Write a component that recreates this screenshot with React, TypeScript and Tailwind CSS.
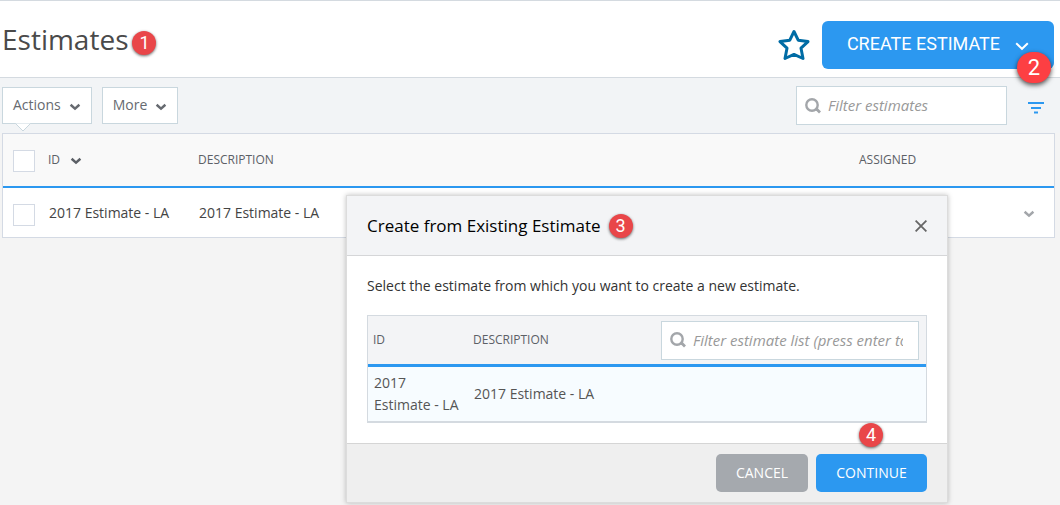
import React, { useState } from 'react';
import clsx from 'clsx';

interface Estimate {
  id: string;
  description: string;
  assigned: string;
}

const ESTIMATES: Estimate[] = [
  { id: '2017 Estimate - LA', description: '2017 Estimate - LA', assigned: '' },
];

const Chevron: React.FC<{ className?: string }> = ({ className }) => (
  <svg viewBox="0 0 12 8" className={clsx('h-2 w-3 shrink-0', className)} fill="none" stroke="currentColor" strokeWidth="2.5" aria-hidden="true">
    <path d="M1.6 1.8 6 5.6l4.4-3.8" />
  </svg>
);

const SearchIcon: React.FC = () => (
  <svg viewBox="0 0 16 16" className="size-4 shrink-0 text-[#a3a6aa]" fill="none" stroke="currentColor" aria-hidden="true">
    <circle cx="7" cy="7" r="5.7" strokeWidth="2.4" />
    <path d="M10.500 11.500h1.500l3 3" strokeWidth="2.8" />
  </svg>
);

const StarIcon: React.FC = () => (
  <svg viewBox="0 0 32 32" className="size-8" fill="none" stroke="#006ca5" strokeWidth="3" strokeLinejoin="round" aria-hidden="true">
    <path d="M16 2.500 20.200 11.200 30 12.600 23 19.200 25 29.500 16 25.400 7 29.500 9 19.200 2 12.600 11.800 11.200z" />
  </svg>
);

const FilterIcon: React.FC = () => (
  <svg viewBox="0 0 16 12" className="h-3 w-4" fill="#2c98f0" aria-hidden="true">
    <path d="M0 0h16v2H0zM3 5h10v2H3zM6 9.500h4v2H6z" />
  </svg>
);

const StepBadge: React.FC<{ step: number; className?: string }> = ({ step, className }) => (
  <span
    className={clsx(
      "flex size-6 items-center justify-center rounded-full bg-[#e94649] font-['Roboto',sans-serif] text-lg text-white shadow-[0_1px_3px_rgba(0,0,0,0.6)]",
      className
    )}
  >
    {step}
  </span>
);

const SearchField: React.FC<{ id: string; label: string; className?: string }> = ({ id, label, className }) => (
  <div className={clsx('flex h-[39px] items-center gap-[7px] border border-[#c9d7de] bg-white pl-2 pr-[15px]', className)}>
    <label htmlFor={id} className="sr-only">{label}</label>
    <SearchIcon />
    <input
      id={id}
      type="text"
      placeholder={label}
      className="w-full min-w-0 text-[15px] italic text-[#555] outline-none placeholder:text-[#999]"
    />
  </div>
);

const CheckBox: React.FC<{ label: string }> = ({ label }) => (
  <input
    type="checkbox"
    aria-label={label}
    className="block size-[22px] appearance-none border border-[#d4dae4] bg-white checked:bg-[#2c98f0]"
  />
);

const CreateDialog: React.FC<{ onClose: () => void }> = ({ onClose }) => (
  <section
    role="dialog"
    aria-labelledby="dialog-title"
    className="absolute right-28 top-[195px] w-[602px] max-w-full border border-[#dcdcdc] bg-white shadow-[0_0_5px_rgba(0,0,0,0.25)]"
  >
    <header className="flex h-[60px] items-center border-b border-[#d5d6d8] bg-[#f3f4f6] px-5">
      <h2 id="dialog-title" className="text-[17px] text-black">Create from Existing Estimate</h2>
      <StepBadge step={3} className="ml-2" />
      <button type="button" aria-label="Close" onClick={onClose} className="ml-auto text-[#666]">
        <svg viewBox="0 0 12 12" className="size-3" fill="none" stroke="currentColor" strokeWidth="1.8" aria-hidden="true">
          <path d="m.6.6 10.8 10.8M11.4.6.6 11.4" />
        </svg>
      </button>
    </header>

    <div className="px-5 pb-5 pt-5">
      <p className="text-sm text-[#333]">Select the estimate from which you want to create a new estimate.</p>
      <table className="mt-[19px] w-full border-separate border-spacing-0 border border-b-2 border-[#d4dae0] text-left">
        <thead className="bg-[#f3f4f6] text-xs text-[#5c6066]">
          <tr>
            <th className="h-[51px] w-[100px] border-b-3 border-[#2c98f0] pl-[5px] font-medium">ID</th>
            <th className="border-b-3 border-[#2c98f0] pl-[5px] font-medium">DESCRIPTION</th>
            <th className="w-[265px] border-b-3 border-[#2c98f0] pr-[7px] font-normal">
              <SearchField id="filter-list" label="Filter estimate list (press enter to search)" />
            </th>
          </tr>
        </thead>
        <tbody className="bg-[#f7fcff] text-sm leading-[22px] text-[#555]">
          {ESTIMATES.map(item => (
            <tr key={item.id}>
              <td className="py-[5px] pl-1.5 pr-2">{item.id}</td>
              <td className="pl-1.5" colSpan={2}>{item.description}</td>
            </tr>
          ))}
        </tbody>
      </table>
    </div>

    <footer className="relative flex h-[59px] items-center justify-end gap-2 border-t border-[#d5d5d5] bg-[#efefef] px-5">
      <button type="button" onClick={onClose} className="h-[38px] w-[92px] rounded-[5px] bg-[#a5a9ae] text-sm text-white">CANCEL</button>
      <button type="button" className="h-[38px] w-[111px] rounded-[5px] bg-[#2c98f0] text-sm text-white">CONTINUE</button>
      <StepBadge step={4} className="absolute -top-[21px] right-16" />
    </footer>
  </section>
);

const App: React.FC = () => {
  const [dialogOpen, setDialogOpen] = useState(true);

  return (
    <div className="relative min-h-screen overflow-hidden bg-[#f4f4f4] font-['Open_Sans',sans-serif]">
      <header className="flex h-[78px] items-center border-y border-[#d4dae0] bg-white pl-0.5 pr-1.5">
        <h1 className="text-[28px] text-[#4a4a4a]">Estimates</h1>
        <StepBadge step={1} className="ml-1 mt-2" />
        <button type="button" aria-label="Add to favorites" className="ml-auto mt-3"><StarIcon /></button>
        <div className="relative ml-3 mt-3">
          <button
            type="button"
            onClick={() => setDialogOpen(true)}
            className="flex h-12 items-center gap-[15px] rounded-md bg-[#2c98f0] px-[25px] font-['Roboto',sans-serif] text-lg text-white"
          >
            <span className="pb-0.5">CREATE ESTIMATE</span>
            <svg viewBox="0 0 14 9" className="mt-0.5 h-[9px] w-3.5" fill="none" stroke="currentColor" strokeWidth="2" aria-hidden="true">
              <path d="m1.2 1.2 5.8 5.6 5.8-5.6" />
            </svg>
          </button>
          <span className="absolute -bottom-3.5 right-[3px] flex h-[31px] w-[34px] items-center justify-center rounded-full bg-[#fd3f43] font-['Roboto',sans-serif] text-[22px] text-white shadow-[0_2px_5px_rgba(0,0,0,0.7)]">
            2
          </span>
        </div>
      </header>

      <div className="flex h-[55px] items-center gap-2.5 bg-[#f2f4f6] pl-0.5 pr-4 text-sm text-[#666a70]">
        <button type="button" className="relative flex h-[37px] items-center gap-2 border border-[#c9d7de] bg-white px-2.5">
          <span className="pb-0.5">Actions</span>
          <Chevron className="mt-0.5" />
          <svg viewBox="0 0 16 9" className="absolute left-3 top-[35px] h-[9px] w-4" fill="#fff" stroke="#c9d7de" aria-hidden="true">
            <path d="M.5.5 8 8 15.500.5" />
          </svg>
        </button>
        <button type="button" className="flex h-[37px] items-center gap-2 border border-[#c9d7de] bg-white px-2.5">
          <span className="pb-0.5">More</span>
          <Chevron className="mt-0.5" />
        </button>
        <SearchField id="filter-estimates" label="Filter estimates" className="ml-auto w-[211px]" />
        <button type="button" aria-label="Filters" className="ml-[11px] mt-1"><FilterIcon /></button>
      </div>

      <main className="pl-0.5 pr-[5px]">
        <table className="w-full table-fixed border-separate border-spacing-0 border border-[#d4dae4] text-left">
          <thead className="bg-[#f9f9f9] text-xs text-[#5c6066]">
            <tr>
              <th className="h-[54px] w-[45px] border-b-2 border-[#2c98f0] pl-2.5 pt-0.5 font-normal"><CheckBox label="Select all estimates" /></th>
              <th className="w-[150px] border-b-2 border-[#2c98f0] font-medium">
                <span className="flex items-center gap-2.5">ID <Chevron className="mt-0.5" /></span>
              </th>
              <th className="border-b-2 border-[#2c98f0] font-medium">DESCRIPTION</th>
              <th className="w-[145px] border-b-2 border-[#2c98f0] font-medium">ASSIGNED</th>
              <th className="w-[50px] border-b-2 border-[#2c98f0]" />
            </tr>
          </thead>
          <tbody className="bg-white text-sm text-[#444]">
            {ESTIMATES.map(item => (
              <tr key={item.id}>
                <td className="h-[49px] pl-2.5 pt-1"><CheckBox label={`Select ${item.id}`} /></td>
                <td className="pl-px">{item.id}</td>
                <td className="pl-px">{item.description}</td>
                <td>{item.assigned}</td>
                <td>
                  <button type="button" aria-label="Row actions" className="mx-auto flex items-center text-[#a3a6aa]"><Chevron className="mt-0.5" /></button>
                </td>
              </tr>
            ))}
          </tbody>
        </table>
      </main>

      {dialogOpen && <CreateDialog onClose={() => setDialogOpen(false)} />}
    </div>
  );
};

export default App;
